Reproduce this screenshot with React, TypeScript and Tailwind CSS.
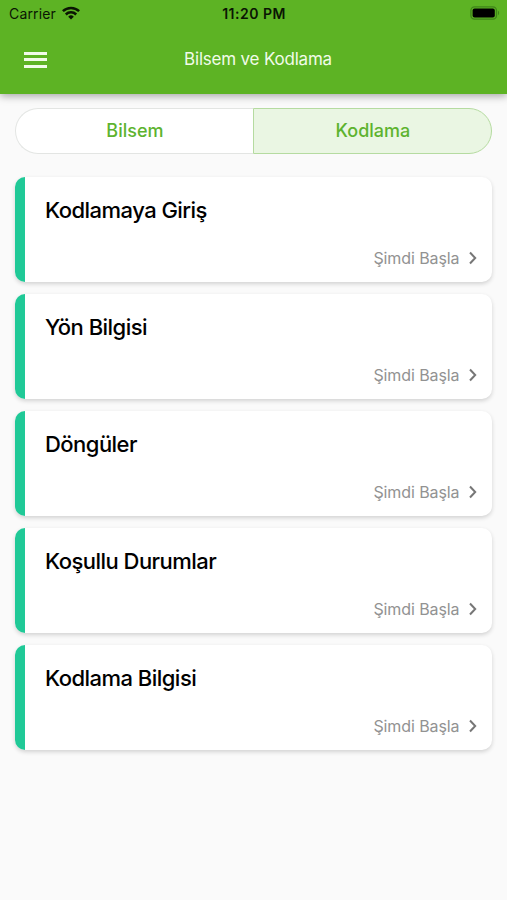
import React, { useState } from 'react';
import clsx from 'clsx';

interface LessonCardProps {
  title: string;
}

const tabs = ['Bilsem', 'Kodlama'];

const lessons = [
  'Kodlamaya Giriş',
  'Yön Bilgisi',
  'Döngüler',
  'Koşullu Durumlar',
  'Kodlama Bilgisi',
];

const WifiIcon = () => (
  <svg className="-mt-[2px] h-[14px] w-[18px]" viewBox="0 0 18 14" fill="none" stroke="#0a1503" strokeWidth="2.5">
    <path d="M0.9 5.2a11.6 11.6 0 0 1 16.2 0" />
    <path d="M3.8 8.5a7.4 7.4 0 0 1 10.4 0" />
    <path d="M9 13.6 6.2 10.7a4 4 0 0 1 5.6 0z" fill="#0a1503" stroke="none" />
  </svg>
);

const BatteryIcon = () => (
  <svg className="-mt-[2px] h-[14px] w-[30px]" viewBox="0 0 30 14">
    <rect x="0.9" y="0.9" width="25.6" height="12.2" rx="3.6" fill="none" stroke="#3f8519" strokeWidth="1.3" />
    <rect x="2.6" y="2.6" width="22.2" height="8.8" rx="2" fill="#000" />
    <path d="M28 4.8c1.5.6 1.5 3.8 0 4.4z" fill="#3f8519" />
  </svg>
);

const StatusBar = () => (
  <div className="grid h-7 grid-cols-3 items-center pr-[7px] pl-[9px] text-[#0a1503]">
    <div className="flex items-center gap-[6px]">
      <span className="-mt-px text-[14px] tracking-[0.15px]">Carrier</span>
      <WifiIcon />
    </div>
    <span className="-mt-px -ml-[1px] text-center text-[14px] font-semibold tracking-[0.5px] whitespace-nowrap">11:20 PM</span>
    <div className="flex justify-end">
      <BatteryIcon />
    </div>
  </div>
);

const LessonCard: React.FC<LessonCardProps> = ({ title }) => (
  <div className="flex h-[105px] overflow-hidden rounded-[10px] bg-white shadow-[0_2px_4px_rgba(0,0,0,0.16)]">
    <div className="w-[10px] shrink-0 bg-[#20c997]" />
    <div className="flex flex-1 flex-col justify-between pt-[18px] pr-[12px] pb-[12px] pl-[19.6px]">
      <h2 className="text-[22px] leading-[30px] font-medium tracking-[-0.53px] text-black">{title}</h2>
      <button className="flex items-center gap-[7px] self-end text-[16px] leading-6 tracking-[-0.1px] text-[#929292]">
        <span>Şimdi Başla</span>
        <svg className="h-4 w-[14px]" viewBox="0 0 14 16" fill="none" stroke="#777" strokeWidth="2">
          <path d="m4 2.5 5.2 5.5L4 13.5" />
        </svg>
      </button>
    </div>
  </div>
);

export default function App() {
  const [active, setActive] = useState('Kodlama');

  return (
    <div className="flex h-[900px] w-[507px] flex-col bg-[#fafafa] font-['Inter','Liberation_Sans',sans-serif]">
      <header className="h-[94px] shrink-0 bg-[#5db324] shadow-[0_2px_8px_rgba(0,0,0,0.35)]">
        <StatusBar />
        <div className="grid h-[63px] grid-cols-[64px_1fr_64px] items-center">
          <button aria-label="Menü" className="ml-6 flex h-[16px] w-[22.5px] flex-col justify-between">
            <span className="h-[3px] w-full bg-[#f1fbe9]" />
            <span className="h-[3px] w-full bg-[#f1fbe9]" />
            <span className="h-[3px] w-full bg-[#f1fbe9]" />
          </button>
          <h1 className="pl-[9px] text-center text-[17px] tracking-[-0.2px] text-[#f1fbe9]">Bilsem ve Kodlama</h1>
        </div>
      </header>

      <main className="flex flex-col gap-[23.4px] pt-[14px] pr-[14.6px] pl-[15.4px]">
        <div className="flex h-[46px]">
          {tabs.map((tab) => (
            <button
              key={tab}
              onClick={() => setActive(tab)}
              className={clsx(
                'flex-1 border pb-[2px] text-[18px] font-medium text-[#5db32f] first:rounded-l-full last:rounded-r-full',
                active === tab ? 'border-[#b5dba0] bg-[#eaf6e3]' : 'border-[#e3e5e3] bg-white first:border-r-0 last:border-l-0',
              )}
            >
              {tab}
            </button>
          ))}
        </div>

        <div className="flex flex-col gap-[11.85px]">
          {lessons.map((title) => (
            <LessonCard key={title} title={title} />
          ))}
        </div>
      </main>
    </div>
  );
}
